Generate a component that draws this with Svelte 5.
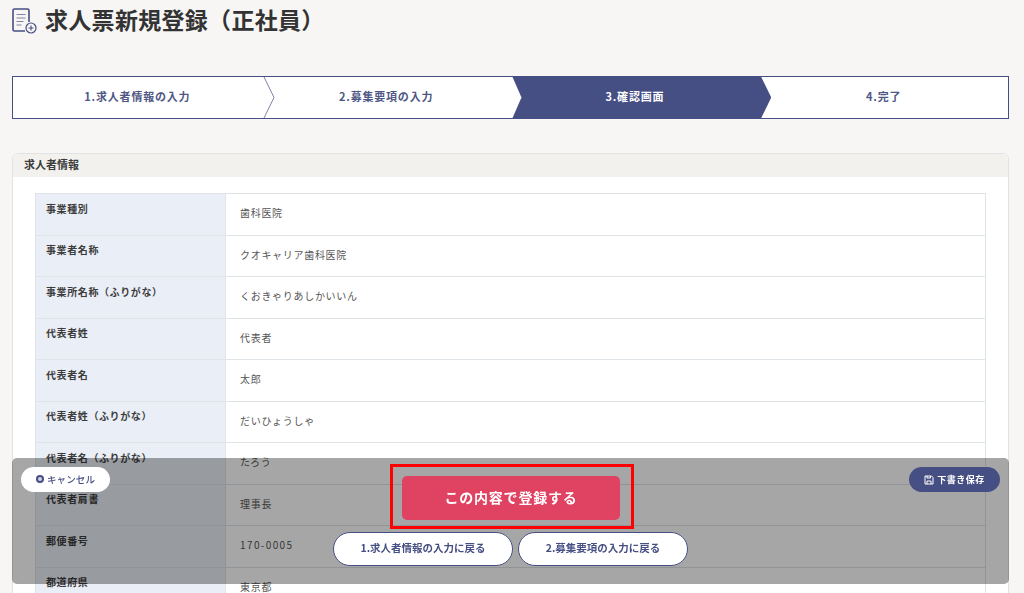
<script>
    const rows = [
        ['事業種別', '歯科医院'],
        ['事業者名称', 'クオキャリア歯科医院'],
        ['事業所名称（ふりがな）', 'くおきゃりあしかいいん'],
        ['代表者姓', '代表者'],
        ['代表者名', '太郎'],
        ['代表者姓（ふりがな）', 'だいひょうしゃ'],
        ['代表者名（ふりがな）', 'たろう'],
        ['代表者肩書', '理事長'],
        ['郵便番号', '170-0005'],
        ['都道府県', '東京都']
    ];

    const steps = ['1.求人者情報の入力', '2.募集要項の入力', '3.確認画面', '4.完了'];
</script>

<div class="page">
    <h1>
        <svg class="title-icon" width="25" height="26" viewBox="0 0 25 26" fill="none" stroke="#464f84">
            <path d="M13 23H2.500a1.500 1.500 0 0 1-1.500-1.500V2.500A1.500 1.500 0 0 1 2.500 1h13A1.500 1.500 0 0 1 17 2.500V14" stroke-width="1.6" />
            <path d="M4.500 6.500h9M4.500 10h9M4.500 13.500h7M4.500 17h5" stroke="#7f85aa" stroke-width="1.200" />
            <circle cx="19" cy="20" r="5" stroke-width="1.200" fill="#f7f6f5" />
            <path d="M19 17.500v5M16.500 20h5" stroke-width="1.100" />
        </svg>
        <span>求人票新規登録（正社員）</span>
    </h1>

    <ol class="steps">
        {#each steps as step, i}
            <li class:current={i === 2}>
                <span>{step}</span>
                {#if i === 0}
                    <svg class="chevron" width="13" height="41" viewBox="0 0 13 41" fill="#fff" stroke="#7c82aa">
                        <path d="M2 0l10 20.500L2 41" />
                    </svg>
                {/if}
                {#if i === 1}
                    <span class="notch"></span>
                {/if}
                {#if i === 2}
                    <span class="arrow"></span>
                {/if}
            </li>
        {/each}
    </ol>

    <section class="panel">
        <h2>求人者情報</h2>
        <div class="panel-body">
            <table>
                <tbody>
                    {#each rows as row}
                        <tr>
                            <th>{row[0]}</th>
                            <td class:num={/^\d/.test(row[1])}>{row[1]}</td>
                        </tr>
                    {/each}
                </tbody>
            </table>
        </div>
    </section>
</div>

<div class="action-bar">
    <button class="cancel">
        <span class="dot"></span>キャンセル
    </button>

    <div class="center">
        <div class="highlight">
            <button class="submit">この内容で登録する</button>
        </div>
        <div class="back-buttons">
            <button class="back first">1.求人者情報の入力に戻る</button>
            <button class="back second">2.募集要項の入力に戻る</button>
        </div>
    </div>

    <button class="draft">
        <svg width="10" height="10" viewBox="0 0 10 10" fill="none" stroke="#fff" stroke-width="1">
            <path d="M1 1h6.500L9 2.500V9H1z" />
            <path d="M3 1v2h3.500V1M3 9V6h4v3" />
        </svg>
        下書き保存
    </button>
</div>

<style>
    :global(body) {
        background: #f7f6f5;
        font-family: "Noto Sans CJK JP", "Noto Sans", sans-serif;
        color: #3c3c3c;
        overflow: hidden;
    }

    .page {
        height: 593px;
        overflow: hidden;
        padding: 0 15px 0 12px;
        box-sizing: border-box;
    }

    h1 {
        display: flex;
        align-items: center;
        gap: 8px;
        margin: 0;
        height: 40px;
        font-size: 23px;
        font-weight: 700;
        color: #333;
        letter-spacing: 0.3px;
    }

    h1 span {
        margin-top: -3px;
    }

    .title-icon {
        flex-shrink: 0;
        margin-top: 2px;
    }

    .steps {
        display: flex;
        list-style: none;
        margin: 36px 0 0;
        padding: 0;
        height: 43px;
        box-sizing: border-box;
        border: 1.5px solid #464f84;
        background: #fff;
    }

    .steps li {
        position: relative;
        flex: 1;
        display: flex;
        align-items: center;
        justify-content: center;
        padding-bottom: 4px;
        font-size: 11px;
        font-weight: 700;
        letter-spacing: 0.8px;
        color: #4f5785;
    }

    .steps li.current {
        background: #464f84;
        color: #fff;
    }

    .chevron {
        position: absolute;
        right: -13px;
        top: 0;
        z-index: 1;
    }

    .notch {
        position: absolute;
        right: -11px;
        top: 0;
        bottom: 0;
        width: 11px;
        background: #fff;
        z-index: 1;
        clip-path: polygon(0 0, 2px 0, 100% 50%, 2px 100%, 0 100%);
    }

    .arrow {
        position: absolute;
        right: -12px;
        top: 0;
        bottom: 0;
        width: 13px;
        background: #464f84;
        z-index: 1;
        clip-path: polygon(0 0, 3px 0, 100% 50%, 3px 100%, 0 100%);
    }

    .panel {
        margin-top: 34px;
        background: #fff;
        border: 1px solid #e1e3e3;
        border-radius: 6px 6px 0 0;
    }

    h2 {
        margin: 0;
        padding: 0 11px;
        height: 23px;
        line-height: 21px;
        font-size: 11px;
        font-weight: 700;
        background: #f2f1ee;
        border-radius: 6px 6px 0 0;
        color: #3c3c3c;
    }

    .panel-body {
        padding: 16px 22px;
    }

    table {
        width: 100%;
        border-collapse: collapse;
        table-layout: fixed;
    }

    th,
    td {
        border: 1px solid #dfe4e8;
        height: 41.5px;
        box-sizing: border-box;
        font-size: 10px;
        text-align: left;
    }

    th {
        width: 190px;
        padding: 0 10px 12px;
        background: #eaeef6;
        font-weight: 700;
        letter-spacing: 0.6px;
        color: #3c3c3c;
    }

    td {
        padding: 0 14px 3px;
        color: #555;
        letter-spacing: 0.7px;
    }

    td.num {
        letter-spacing: 1.4px;
    }

    button {
        font-family: inherit;
        cursor: pointer;
        border: none;
    }

    /* fixed bar over the table */
    .action-bar {
        position: fixed;
        left: 12px;
        top: 458px;
        width: 997px;
        height: 126px;
        background: rgba(0, 0, 0, 0.35);
        border-radius: 5px;
        display: flex;
        justify-content: center;
    }

    .cancel {
        position: absolute;
        left: 9px;
        top: 9px;
        width: 89px;
        height: 25px;
        border-radius: 13px;
        background: #fff;
        color: #464f84;
        font-size: 9.5px;
        font-weight: 500;
        letter-spacing: 0.1px;
        display: flex;
        align-items: center;
        justify-content: center;
        gap: 3px;
        padding: 0 0 1px;
    }

    .dot {
        width: 4px;
        height: 4px;
        border: 2.5px solid #464f84;
        border-radius: 50%;
        background: #cfd2e2;
    }

    .draft {
        position: absolute;
        right: 9px;
        top: 9px;
        width: 91px;
        height: 25px;
        border-radius: 13px;
        background: #464f84;
        color: #fff;
        font-size: 9px;
        font-weight: 700;
        display: flex;
        align-items: center;
        justify-content: center;
        gap: 3px;
        padding: 0;
        letter-spacing: 0.5px;
    }

    .center {
        display: flex;
        flex-direction: column;
        align-items: center;
        padding-top: 6px;
    }

    .highlight {
        border: 3px solid #ff0000;
        padding: 9px 11px 6px 9px;
        margin-left: 3px;
        line-height: 0;
    }

    .submit {
        width: 218px;
        height: 44px;
        border-radius: 5px;
        background: #e04262;
        color: #fff;
        font-size: 14px;
        font-weight: 700;
        letter-spacing: 0.8px;
        padding: 0 0 3px;
    }

    .back-buttons {
        display: flex;
        gap: 5px;
        margin-top: 3px;
    }

    .back {
        height: 34px;
        box-sizing: border-box;
        border: 1.5px solid #464f84;
        border-radius: 17px;
        background: #fff;
        color: #464f84;
        font-size: 10.5px;
        font-weight: 700;
        padding: 0 0 3px;
    }

    .first {
        width: 180px;
    }

    .second {
        width: 170px;
    }
</style>
